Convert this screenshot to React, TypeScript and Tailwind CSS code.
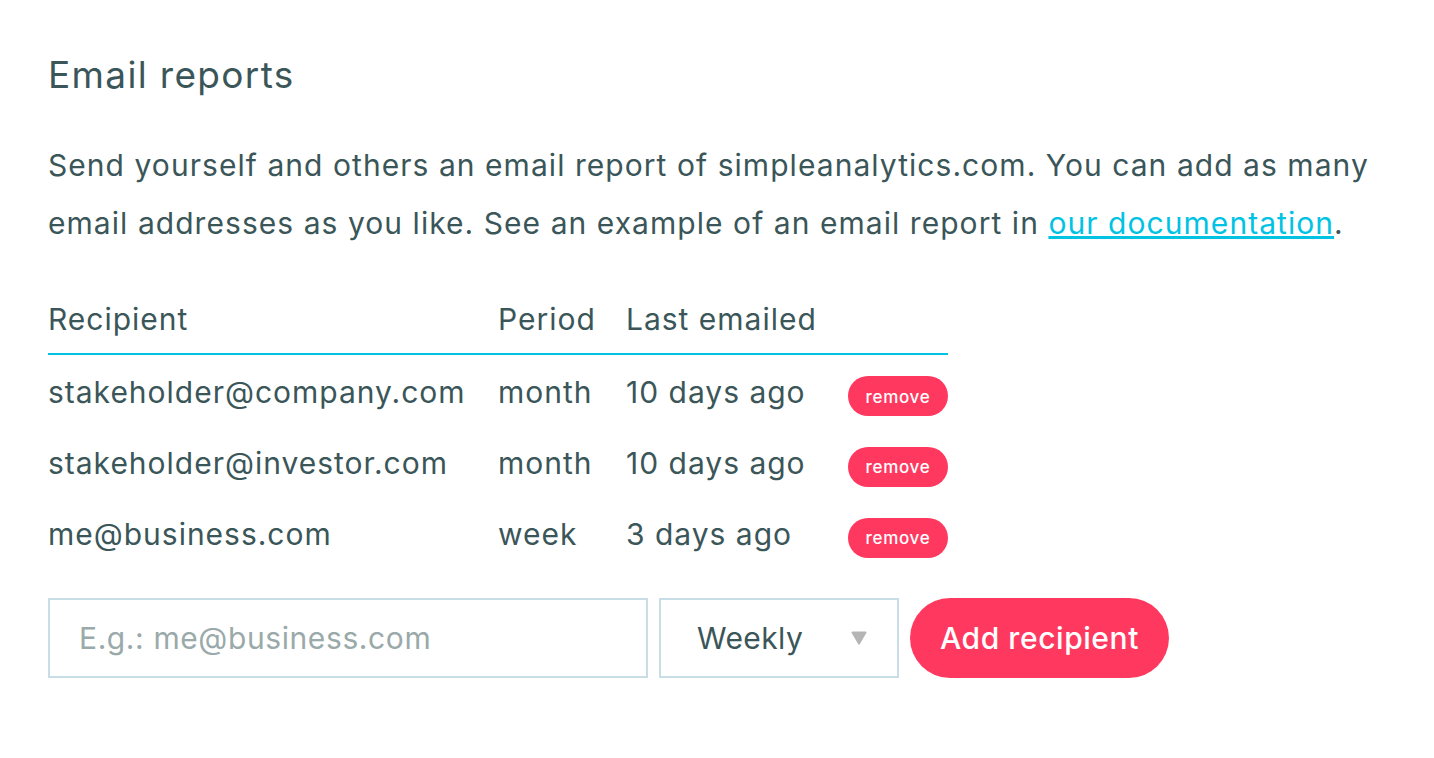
import React, { useState } from 'react';

const rows = [
  { email: 'stakeholder@company.com', period: 'month', last: '10 days ago' },
  { email: 'stakeholder@investor.com', period: 'month', last: '10 days ago' },
  { email: 'me@business.com', period: 'week', last: '3 days ago' },
];

export default function App() {
  const [email, setEmail] = useState('');
  const [period, setPeriod] = useState('Weekly');

  return (
    <div
      className="min-h-screen bg-white px-12 pt-[51px] text-[#3b5659]"
      style={{ fontFamily: 'Inter, "Noto Sans", sans-serif' }}
    >
      <h2 className="text-[37px] leading-[48px] font-normal tracking-[0.036em]">Email reports</h2>

      <p className="mt-[37px] text-[30px] leading-[58px] max-w-[1370px] tracking-[0.035em]">
        Send yourself and others an email report of simpleanalytics.com. You can add as many
        email addresses as you like. See an example of an email report in{' '}
        <a href="#" className="text-[#00c3e3] underline">our documentation</a>.
      </p>

      <table className="mt-[49px] w-[900px] text-[30px] tracking-[0.033em] border-collapse">
        <thead>
          <tr className="border-b-2 border-[#00c3e3] text-left">
            <th className="font-normal pb-[16px] w-[450px] leading-[36px]">Recipient</th>
            <th className="font-normal pb-[16px] w-[128px] leading-[36px]">Period</th>
            <th className="font-normal pb-[16px] leading-[36px]">Last emailed</th>
            <th className="w-[100px]"></th>
          </tr>
        </thead>
        <tbody>
          {rows.map((r) => (
            <tr key={r.email} className="h-[71px]">
              <td className="pt-[5px]">{r.email}</td>
              <td className="pt-[5px]">{r.period}</td>
              <td className="pt-[5px]">{r.last}</td>
              <td className="text-right pt-[6px]">
                <button className="bg-[#ff3860] text-white text-[17px] font-medium rounded-full h-[40px] w-[100px] leading-none pt-[2px] tracking-[0.7px]">
                  remove
                </button>
              </td>
            </tr>
          ))}
        </tbody>
      </table>

      <div className="mt-[31px] flex items-center gap-[11px] tracking-[0.56px]">
        <input
          value={email}
          onChange={(e) => setEmail(e.target.value)}
          placeholder="E.g.: me@business.com"
          className="w-[600px] h-[80px] border-2 border-[#c9dde6] px-[29px] text-[30px] tracking-[0.6px] placeholder-[#9aa9a9] outline-none"
        />
        <div className="relative w-[240px] h-[80px] border-2 border-[#c9dde6]">
          <select
            value={period}
            onChange={(e) => setPeriod(e.target.value)}
            className="appearance-none w-full h-full bg-white pl-[36px] text-[30px] tracking-[0.4px] outline-none"
          >
            <option>Daily</option>
            <option>Weekly</option>
            <option>Monthly</option>
          </select>
          <svg className="absolute right-[30px] top-[31px] pointer-events-none" width="16" height="14" viewBox="0 0 16 14">
            <path d="M1.5 1.5 H14.5 L8 12.5 Z" fill="#b5b5b5" stroke="#b5b5b5" strokeWidth="2" strokeLinejoin="round" />
          </svg>
        </div>
        <button className="h-[80px] px-[30px] rounded-full bg-[#ff3860] text-white text-[30px] font-medium">
          Add recipient
        </button>
      </div>
    </div>
  );
}
